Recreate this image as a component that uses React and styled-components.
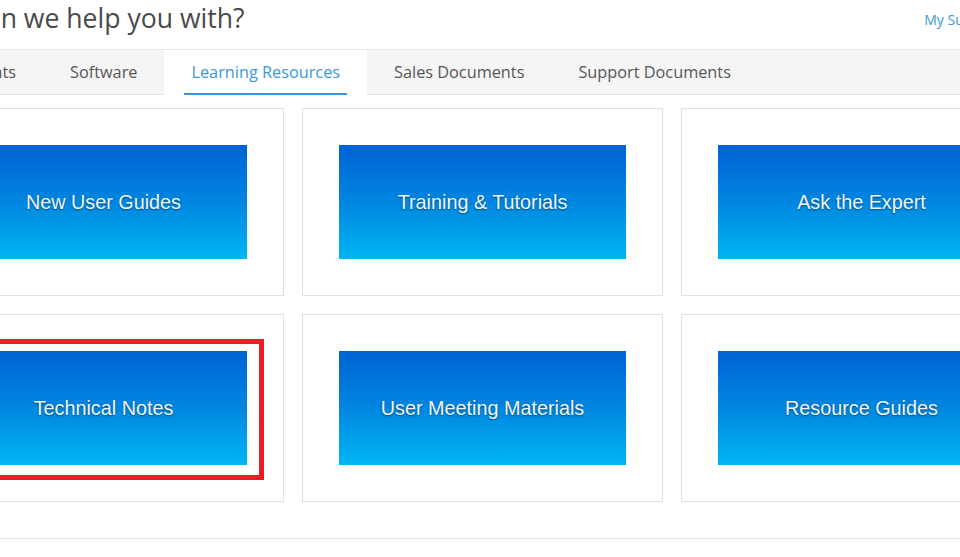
import styled, { createGlobalStyle, css } from "styled-components";

const GlobalStyle = createGlobalStyle`
  html, body {
    margin: 0;
    padding: 0;
    background: #fff;
  }
  body {
    font-family: "Open Sans", "Liberation Sans", sans-serif;
    overflow: hidden;
  }
`;

const Page = styled.div`
  width: 960px;
  height: 557px;
  overflow: hidden;
  background: #fff;
`;

const Header = styled.header`
  height: 49px;
  display: flex;
  justify-content: space-between;
  align-items: flex-start;
`;

const Title = styled.h1`
  margin: 0;
  padding-top: 1px;
  font-size: 26.6px;
  font-weight: 400;
  line-height: 34px;
  color: #4a4a4a;
  text-indent: -90px;
  white-space: nowrap;
`;

const TopLink = styled.a`
  margin-top: 10px;
  margin-right: -40px;
  font-size: 14px;
  line-height: 20px;
  color: #3a97dc;
  text-decoration: none;
  white-space: nowrap;
`;

const TabBar = styled.nav`
  height: 44px;
  background: #f5f5f5;
  border-top: 1px solid #e6e6e6;
  border-bottom: 1px solid #e2e2e2;
  display: flex;
`;

const Leading = styled.div`
  width: 43px;
  display: flex;
  justify-content: flex-end;
`;

const Tab = styled.a`
  position: relative;
  padding: 0 27px;
  display: flex;
  align-items: center;
  font-size: 16.3px;
  color: #555;
  white-space: nowrap;
  text-decoration: none;

  ${props =>
    props.$active &&
    css`
      background: #fff;
      color: #3a97dc;
      height: 47px;
      box-sizing: border-box;
      padding-bottom: 3px;

      &::after {
        content: "";
        position: absolute;
        left: 20px;
        right: 20px;
        bottom: 2px;
        height: 2px;
        background: #3a97dc;
      }
    `}
`;

const Grid = styled.section`
  margin-top: 13px;
  margin-left: -77px;
  display: grid;
  grid-template-columns: repeat(3, 361px);
  gap: 18px;
`;

const Card = styled.div`
  position: relative;
  border: 1px solid #e0e0e0;
  padding: 36px;
`;

const Banner = styled.div`
  height: 114px;
  display: flex;
  align-items: center;
  justify-content: center;
  background: linear-gradient(to bottom, #0063d4 0%, #0086e0 50%, #00b6f3 100%);
  color: #f0f4f9;
  font-family: "Liberation Sans", Arial, sans-serif;
  font-size: 19.8px;
  text-shadow: 0 1px 2px rgba(0, 0, 0, 0.45);
`;

const Highlight = styled.div`
  position: absolute;
  top: 24px;
  right: 19px;
  bottom: 21px;
  left: 19px;
  border: 5px solid #ec1c24;
  pointer-events: none;
`;

const Footer = styled.div`
  margin-top: 36px;
  border-top: 1px solid #e6e6e6;
`;

const resources = [
  { title: "New User Guides" },
  { title: "Training & Tutorials" },
  { title: "Ask the Expert" },
  { title: "Technical Notes", highlighted: true },
  { title: "User Meeting Materials" },
  { title: "Resource Guides" }
];

function App() {
  return (
    <Page>
      <GlobalStyle />
      <Header>
        <Title>How can we help you with?</Title>
        <TopLink href="#">My Support</TopLink>
      </Header>
      <TabBar>
        <Leading>
          <Tab>Instruments</Tab>
        </Leading>
        <Tab>Software</Tab>
        <Tab $active>Learning Resources</Tab>
        <Tab>Sales Documents</Tab>
        <Tab>Support Documents</Tab>
      </TabBar>
      <Grid>
        {resources.map(item => (
          <Card key={item.title}>
            {item.highlighted && <Highlight />}
            <Banner>{item.title}</Banner>
          </Card>
        ))}
      </Grid>
      <Footer />
    </Page>
  );
}

export default App;
